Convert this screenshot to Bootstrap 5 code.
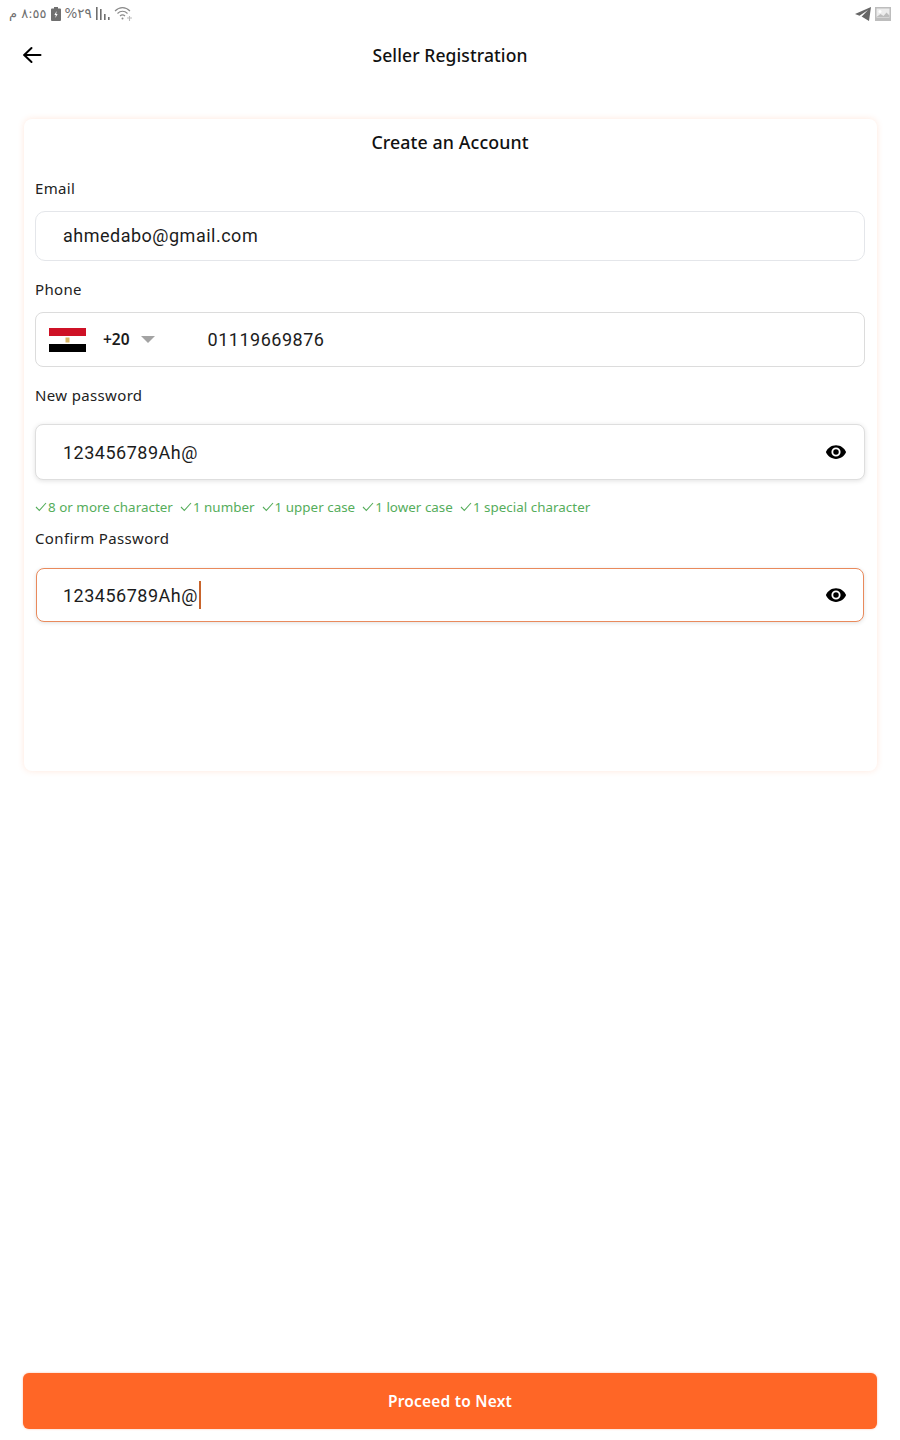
<!DOCTYPE html>
<html lang="en">
<head>
    <meta charset="UTF-8">
    <meta name="viewport" content="width=device-width, initial-scale=1.0">
    <title>Seller Registration</title>
    <link href="https://cdn.jsdelivr.net/npm/bootstrap@5.3.0/dist/css/bootstrap.min.css" rel="stylesheet">
    <style>
        html, body { height: 100%; }
        body { font-family: "Noto Sans", sans-serif; color: #111; background: #fff; overflow: hidden; }
        .screen { height: 1440px; padding-bottom: 11px; }
        .status-row { height: 27px; padding: 0 9px; color: #6f6f6f; }
        .status-text { font-family: "DejaVu Sans", sans-serif; font-size: 13px; line-height: 27px; }
        .status-pct { font-size: 13.5px; }
        .top-bar { height: 56px; padding: 0 22px; }
        .top-title { font-size: 17.5px; font-weight: 500; line-height: 1; letter-spacing: .1px; padding-top: 2px; }
        .back-link { left: 22px; top: 18px; width: 20px; height: 20px; }
        .reg-card { margin: 36px 23px 0 24px; height: 652px; padding: 0 12px 0 11px; border: 0; border-radius: 8px;
            box-shadow: 0 0 6px rgba(255, 120, 60, .18); }
        .card-heading { font-size: 17.8px; font-weight: 500; line-height: 24px; margin-top: 11px; text-align: center; letter-spacing: .1px; }
        .field-label { font-size: 15px; line-height: 20px; margin: 0; color: #222; display: block; letter-spacing: .35px; }
        .label-email { margin-top: 24px; margin-bottom: 13px; }
        .label-phone { margin-top: 18px; margin-bottom: 13px; }
        .label-new { margin-top: 18px; margin-bottom: 19px; }
        .label-confirm { margin-top: 12px; margin-bottom: 20px; }
        .field-box { font-family: Roboto, sans-serif; font-size: 18px; letter-spacing: .5px; background: #fff;
            border: 1px solid #e4e6ea; border-radius: 10px; color: #1c1c1c; }
        .box-email { height: 50px; padding-left: 27px; padding-bottom: 1px; }
        .box-phone { height: 55px; border-color: #dcdcdc; padding-left: 13px; border-radius: 8px; }
        .box-pass { height: 56px; padding: 0 17px 0 27px; border-color: #dedede; border-radius: 8px;
            box-shadow: 0 1px 5px rgba(0, 0, 0, .12); }
        .box-focus { height: 54px; margin: 0 1px; padding: 0 16px 0 26px; border: 1px solid #e98a5c; border-radius: 8px;
            box-shadow: 0 1px 4px rgba(0, 0, 0, .12); }
        .flag-eg { width: 37px; height: 24px; display: block; }
        .dial-code { font-family: "Noto Sans", sans-serif; font-size: 15.5px; font-weight: 600; letter-spacing: 0; margin-left: 17px; }
        .drop-arrow { width: 0; height: 0; margin-left: 11px; border-left: 7.5px solid transparent; border-right: 7.5px solid transparent;
            border-top: 7px solid #a3a3a3; }
        .phone-value { margin-left: 53px; }
        .caret-bar { width: 2px; height: 28px; background: #c8642c; margin-left: 1px; }
        .hint-row { color: #55ad5b; font-size: 13.4px; line-height: 18px; margin-top: 18px; gap: 7px; white-space: nowrap; letter-spacing: .02px; }
        .hint-item { display: flex; align-items: center; gap: 1px; }
        .next-btn { margin: auto 23px 0 23px; height: 56px; padding-top: 8px; background: #ff6626; border: 0; border-radius: 6px; color: #fff;
            font-size: 15.5px; font-weight: 600; letter-spacing: .2px; box-shadow: 0 0 2px rgba(255, 102, 38, .5); }
        .next-btn:hover { background: #ff6626; color: #fff; }
    </style>
</head>
<body>
    <div class="screen d-flex flex-column">
        <div class="status-row d-flex justify-content-between align-items-center">
            <div class="d-flex align-items-center gap-1">
                <span class="status-text" dir="rtl">٨:٥٥ م</span>
                <svg width="10" height="14" viewBox="0 0 10 14"><path fill="#6f6f6f" d="M3 0h4v1.5h2a1 1 0 0 1 1 1V13a1 1 0 0 1-1 1H1a1 1 0 0 1-1-1V2.500a1 1 0 0 1 1-1h2z"/><path fill="#fff" d="M5.600 4 3.400 8h1.400l-.4 3 2.200-4H5.200z"/></svg>
                <span class="status-text status-pct" dir="rtl">٢٩%</span>
                <svg width="14" height="15" viewBox="0 0 14 15" fill="#6f6f6f"><rect x="0" y="1" width="1.600" height="13"/><rect x="4" y="3" width="1.600" height="11"/><rect x="8" y="8" width="1.600" height="6"/><rect x="12" y="11" width="1.600" height="3"/></svg>
                <svg width="19" height="16" viewBox="0 0 19 16" fill="none" stroke="#8a8a8a" stroke-width="1.100"><path d="M1 5c4.500-4.500 10.500-4.500 15 0"/><path d="M3.500 7.500c3-3 7-3 10 0"/><path d="M6 10c1.500-1.500 3.500-1.500 5 0"/><circle cx="8.500" cy="12.500" r="1" fill="#8a8a8a" stroke="none"/><path stroke="#bbb" d="M13 12h5M15.500 10v5"/></svg>
            </div>
            <div class="d-flex align-items-center gap-1">
                <svg width="16" height="14" viewBox="0 0 16 14"><path fill="#666" d="M16 0 0 7l4.500 1.800L13 3 6.500 9.800l.5 0 7 4.200z"/></svg>
                <svg width="16" height="14" viewBox="0 0 16 14"><rect width="16" height="14" fill="#bdbdbd"/><rect x="1.500" y="1.500" width="13" height="9" fill="#ececec"/><circle cx="5" cy="4.500" r="1.500" fill="#fff"/><path fill="#bdbdbd" d="m1.500 10 4-3 3 2 3-3.500 3 3v1.500z"/></svg>
            </div>
        </div>

        <div class="top-bar position-relative d-flex align-items-center justify-content-center">
            <a href="#" class="back-link position-absolute d-flex">
                <svg width="20" height="20" viewBox="0 0 20 20" fill="none" stroke="#000" stroke-width="2" stroke-linecap="round" stroke-linejoin="round"><path d="M18.500 10H2.500"/><path d="M9.500 3 2.200 10l7.300 7"/></svg>
            </a>
            <span class="top-title">Seller Registration</span>
        </div>

        <div class="card reg-card">
            <div class="card-heading">Create an Account</div>

            <label class="field-label label-email">Email</label>
            <div class="field-box box-email d-flex align-items-center">ahmedabo@gmail.com</div>

            <label class="field-label label-phone">Phone</label>
            <div class="field-box box-phone d-flex align-items-center">
                <svg class="flag-eg" viewBox="0 0 37 24"><rect width="37" height="8" fill="#ce1126"/><rect y="8" width="37" height="8" fill="#fff"/><rect y="16" width="37" height="8" fill="#000"/><rect x="16.500" y="9.500" width="4" height="5" fill="#d9b765"/></svg>
                <span class="dial-code">+20</span>
                <span class="drop-arrow"></span>
                <span class="phone-value">01119669876</span>
            </div>

            <label class="field-label label-new">New password</label>
            <div class="field-box box-pass d-flex align-items-center justify-content-between">
                <span>123456789Ah@</span>
                <svg width="22" height="22" viewBox="0 0 24 24"><path fill="#000" d="M12 4.500C7 4.500 2.700 7.600 1 12c1.700 4.400 6 7.500 11 7.500s9.300-3.100 11-7.500c-1.700-4.400-6-7.500-11-7.500zM12 17a5 5 0 1 1 0-10 5 5 0 0 1 0 10zm0-8a3 3 0 1 0 0 6 3 3 0 0 0 0-6z"/></svg>
            </div>

            <div class="hint-row d-flex">
                <span class="hint-item"><svg width="12" height="10" viewBox="0 0 12 10" fill="none" stroke="#55ad5b" stroke-width="1.100"><path d="m1 5 3.300 3.500L11 1"/></svg>8 or more character</span>
                <span class="hint-item"><svg width="12" height="10" viewBox="0 0 12 10" fill="none" stroke="#55ad5b" stroke-width="1.100"><path d="m1 5 3.300 3.500L11 1"/></svg>1 number</span>
                <span class="hint-item"><svg width="12" height="10" viewBox="0 0 12 10" fill="none" stroke="#55ad5b" stroke-width="1.100"><path d="m1 5 3.300 3.500L11 1"/></svg>1 upper case</span>
                <span class="hint-item"><svg width="12" height="10" viewBox="0 0 12 10" fill="none" stroke="#55ad5b" stroke-width="1.100"><path d="m1 5 3.300 3.500L11 1"/></svg>1 lower case</span>
                <span class="hint-item"><svg width="12" height="10" viewBox="0 0 12 10" fill="none" stroke="#55ad5b" stroke-width="1.100"><path d="m1 5 3.300 3.500L11 1"/></svg>1 special character</span>
            </div>

            <label class="field-label label-confirm">Confirm Password</label>
            <div class="field-box box-focus d-flex align-items-center justify-content-between">
                <span class="d-inline-flex align-items-center">123456789Ah@<span class="caret-bar"></span></span>
                <svg width="22" height="22" viewBox="0 0 24 24"><path fill="#000" d="M12 4.500C7 4.500 2.700 7.600 1 12c1.700 4.400 6 7.500 11 7.500s9.300-3.100 11-7.500c-1.700-4.400-6-7.500-11-7.500zM12 17a5 5 0 1 1 0-10 5 5 0 0 1 0 10zm0-8a3 3 0 1 0 0 6 3 3 0 0 0 0-6z"/></svg>
            </div>
        </div>

        <button class="btn next-btn">Proceed to Next</button>
    </div>

    <script src="https://cdn.jsdelivr.net/npm/bootstrap@5.3.0/dist/js/bootstrap.bundle.min.js"></script>
</body>
</html>
